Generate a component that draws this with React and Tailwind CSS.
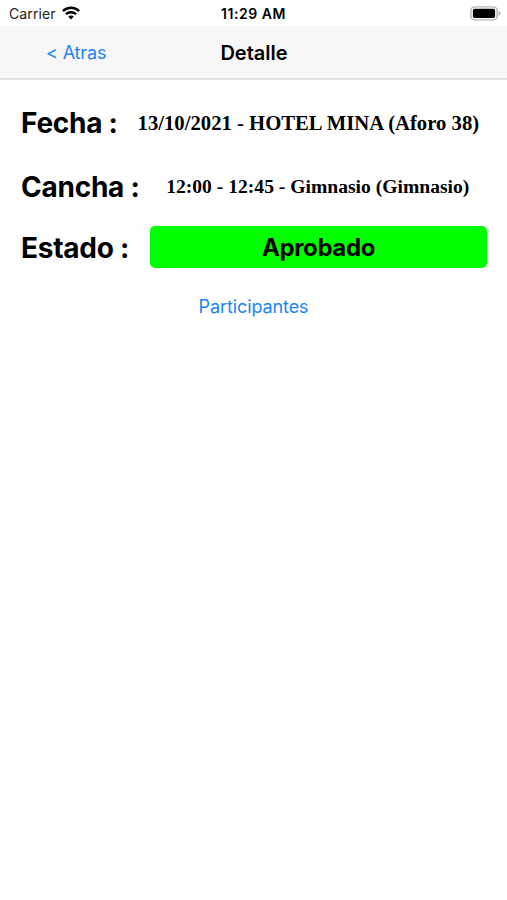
function WifiIcon() {
  return (
    <svg width="18" height="14" viewBox="0 0 18 14" fill="none" stroke="#000" strokeWidth="2.4">
      <path d="M0.9 5.1 C5.4 0.7 12.6 0.7 17.1 5.1" />
      <path d="M3.9 8.2 C6.8 5.5 11.2 5.5 14.1 8.2" />
      <path d="M6.2 10.6 C7.8 9.2 10.2 9.2 11.8 10.6 L9 13.4 Z" fill="#000" stroke="none" />
    </svg>
  );
}

function BatteryIcon() {
  return (
    <svg width="31" height="15" viewBox="0 0 31 15">
      <rect x="0.9" y="0.9" width="26.2" height="13" rx="3.6" fill="#fff" stroke="#b4b4b4" strokeWidth="1.4" />
      <rect x="2.9" y="2.8" width="22.2" height="9.2" rx="1.8" fill="#000" />
      <path d="M28.5 5 C31.2 6 31.2 8.8 28.5 9.8 Z" fill="#b4b4b4" />
    </svg>
  );
}

function StatusBar() {
  return (
    <div className="grid grid-cols-3 items-center h-[26px] pl-[9px] pr-[6px] text-black">
      <div className="flex items-center gap-[6px]">
        <span className="pt-[2px] text-[14px] leading-none tracking-[0.12px] text-[#222]">Carrier</span>
        <WifiIcon />
      </div>
      <span className="pt-[2px] pr-[3px] text-center text-[14px] leading-none font-semibold tracking-[0.55px] whitespace-nowrap">
        11:29 AM
      </span>
      <div className="flex justify-end">
        <BatteryIcon />
      </div>
    </div>
  );
}

function NavBar() {
  return (
    <div className="grid grid-cols-3 items-center h-[54px] bg-[#f7f7f7] border-b-2 border-[#e3e3e3]">
      <button className="pt-[2px] pl-[46px] text-left text-[18px] leading-none tracking-[-0.15px] text-[#1a84f5]">
        &lt; Atras
      </button>
      <h1 className="pt-px pl-px text-center text-[20px] leading-none font-semibold">Detalle</h1>
    </div>
  );
}

function Label({ children }) {
  return (
    <span className="shrink-0 pl-px text-[28px] leading-none font-bold tracking-[-0.25px] whitespace-pre">
      {children}
    </span>
  );
}

function Value({ className, children }) {
  return (
    <span
      className={`flex-1 text-center font-['Liberation_Serif',serif] font-bold leading-none whitespace-nowrap ${className}`}
    >
      {children}
    </span>
  );
}

export default function App() {
  return (
    <div className="h-[900px] overflow-hidden bg-white text-black font-['Inter',sans-serif]">
      <StatusBar />
      <NavBar />

      <div className="flex flex-col pl-5 pr-5">
        <div className="flex items-center h-[64px] mt-[11px]">
          <Label>Fecha :</Label>
          <Value className="pl-[12px] text-[20.7px]">13/10/2021 - HOTEL MINA (Aforo 38)</Value>
        </div>
        <div className="flex items-center h-[64px]">
          <Label>Cancha :</Label>
          <Value className="pl-[9px] text-[19.6px]">12:00 - 12:45 - Gimnasio (Gimnasio)</Value>
        </div>
        <div className="flex items-center justify-between h-[42px] mt-[7px]">
          <span className="flex pt-[2px]">
            <Label>Estado :</Label>
          </span>
          <div className="w-[337px] h-[42px] pt-[2px] flex items-center justify-center rounded-[5px] bg-[#00ff00]">
            <span className="text-[24px] leading-none font-bold tracking-[-0.4px]">Aprobado</span>
          </div>
        </div>
        <button className="self-center mt-[30px] text-[18px] leading-none tracking-[-0.1px] text-[#1a84f5]">
          Participantes
        </button>
      </div>
    </div>
  );
}
